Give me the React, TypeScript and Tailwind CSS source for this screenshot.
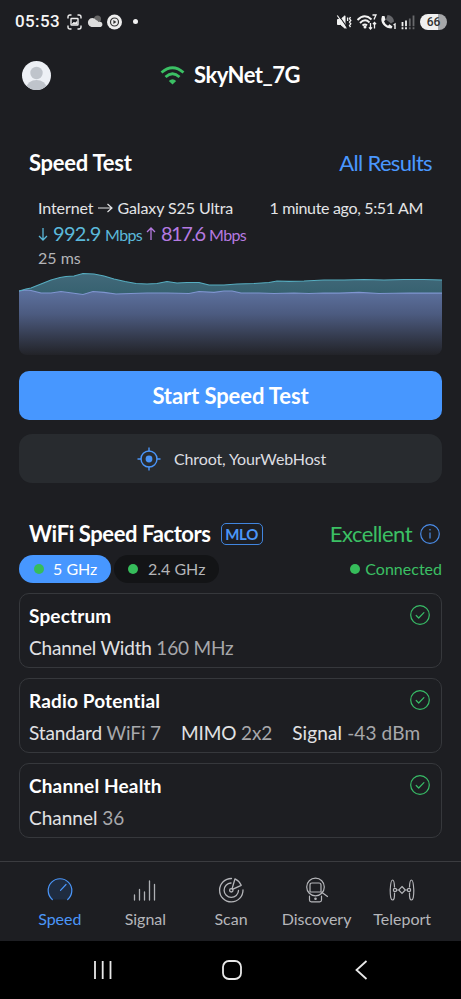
import React from "react";

const download =
  "0,101 7,99 12,98 22,94 32,90 41,87.5 47,86.5 55,86 64,83.5 75,84 85,86 95,89 106,91.5 117,93.5 128,94 138,93.5 148,91.5 158,93 168,92.5 180,92.5 190,95 205,95 218,94 235,93.5 250,92.5 258,91 270,91.3 285,91 305,90 325,90 345,89.5 365,90 385,89.5 405,89.5 423,90";
const upload =
  "0,101 7,100 12,100.5 22,103 32,103 42,101.5 53,103 64,104.5 74,101.5 85,102.3 97,104 112,103.5 128,103 148,103 170,103.5 180,101.5 195,102.3 205,101 213,101 222,103 240,103 255,103.5 275,103 290,103.5 305,103 320,103.2 340,102.3 360,103.5 390,103 423,103.2";

function SpeedChart() {
  return (
    <svg className="block h-[165px] w-full" viewBox="0 0 423 165" preserveAspectRatio="none">
      <defs>
        <linearGradient id="down" x1="0" y1="83" x2="0" y2="165" gradientUnits="userSpaceOnUse">
          <stop offset="0" stopColor="#42697a" />
          <stop offset="0.3" stopColor="#35606e" />
          <stop offset="1" stopColor="#1d1e22" />
        </linearGradient>
        <linearGradient id="up" x1="0" y1="102" x2="0" y2="165" gradientUnits="userSpaceOnUse">
          <stop offset="0" stopColor="#5c709d" />
          <stop offset="0.35" stopColor="#4c5b80" />
          <stop offset="0.75" stopColor="#323849" />
          <stop offset="1" stopColor="#222328" />
        </linearGradient>
      </defs>
      <polygon points={`0,165 ${download} 423,165`} fill="url(#down)" />
      <polygon points={`0,165 ${upload} 423,165`} fill="url(#up)" />
      <polyline points={upload} fill="none" stroke="#7f95d0" strokeWidth="1.2" />
      <polyline points={download} fill="none" stroke="#56adc0" strokeWidth="1.2" />
    </svg>
  );
}

function StatusBar() {
  return (
    <header className="flex h-[43px] items-center pl-[15px] pr-[14px] text-[#f5f5f5]">
      <span className="w-[52px] font-['Roboto'] text-[17px] font-medium tracking-[0.4px]">05:53</span>
      <svg className="h-4 w-16" viewBox="0 0 64 16" fill="none" stroke="#eee" strokeWidth="1.4">
        <path d="M1 4.500V3Q1 1 3 1H4.500M10.500 1h1.500Q14 1 14 3V4.500M14 11.500v1.500q0 2-2 2H10.500M4.500 15H3q-2 0-2-2V11.500" />
        <rect x="4" y="4.500" width="7" height="6.500" rx="0.5" />
        <path d="M5 10l2-2 1 1 2-1.500v2.500z" fill="#eee" strokeWidth="0.6" />
        <circle cx="30.500" cy="5" r="3.500" fill="#666" stroke="none" />
        <path d="M24.500 13a4.500 4.500 0 1 1 4.500-7 4 4 0 0 1 2.500 2A2.700 2.700 0 1 1 32 13z" fill="#ddd" stroke="none" />
        <circle cx="47.500" cy="8" r="7.500" fill="#eee" stroke="none" />
        <circle cx="47.500" cy="8" r="4" stroke="#333" strokeWidth="1.200" />
        <path d="M46.400 6l3 2-3 2z" fill="#333" stroke="none" />
      </svg>
      <span className="ml-[2px] size-[5px] rounded-full bg-[#f2f2f2]" />
      <svg className="ml-auto h-[18px] w-[80px]" viewBox="0 0 80 18" fill="none" stroke="#f2f2f2" strokeWidth="1.500">
        <path d="M1.500 6.500h3L9 2.800v12.400l-4.500-3.700h-3z" fill="#f2f2f2" strokeWidth="1" strokeLinejoin="round" />
        <path d="M2.500 2l9 13" stroke="#1d1e22" strokeWidth="1.200" />
        <path d="M1.300 2.500l9 13" strokeWidth="1.200" />
        <path d="M11.600 4.500v3.500M14.500 4l-1 1.700 1.300 1.700-1.300 1.700 1.300 1.700-1.300 1.700 1 1.700" strokeWidth="1.300" />
        <path d="M21.500 7q7-7 14-.5M24 10q5-5 9.500-.5M26.500 12.500q2.500-2.200 4.500 0" strokeWidth="1.900" />
        <circle cx="29" cy="14" r="1.500" fill="#f2f2f2" stroke="none" />
        <path d="M36.500 2h3.500l-2 4.500M34.500 10v6m-1.600-1.600 1.600 1.600 1.600-1.600M38.500 15.500V9.500m-1.600 1.600 1.600-1.600 1.600 1.600" strokeWidth="1.300" />
        <path d="M51.500 2a6.500 6.500 0 0 1 6.500 6.500l-3 2-5-4z" fill="#65666a" stroke="none" />
        <path d="M46 3q-1.800 5.500 1.500 9t8 3.500l1-2-3-2.300-1.500 1.500q-3-1.500-4-4.500l1.500-1.500-1-3.700z" fill="#f2f2f2" stroke="none" />
        <path d="M57.500 12l1.500-1v5" strokeWidth="1.400" />
        <path d="M66.500 9v4.200M66.500 14.200v2M70 7.500v5.700M70 14.200v2" strokeWidth="1.800" />
        <path d="M73.800 5.500v7.700M73.800 14.200v2M77.500 2.500v10.700M77.500 14.200v2" stroke="#68696c" strokeWidth="1.800" />
      </svg>
      <span className="ml-1 flex h-[16px] w-[27px] items-center justify-center rounded-full bg-linear-to-r from-[#f0f0f0] from-66% to-[#a6a7a9] to-66% font-['Roboto'] text-[12px] leading-none font-medium text-[#333]">66</span>
    </header>
  );
}

function CheckCircle() {
  return (
    <svg className="size-5 shrink-0" viewBox="0 0 20 20" fill="none" stroke="#38bd67" strokeWidth="1.200" strokeLinecap="round" strokeLinejoin="round">
      <circle cx="10" cy="10" r="9.300" />
      <path d="M6.200 10.500l2.500 2.500 5.200-5.400" />
    </svg>
  );
}

function FactorCard({ title, children }: { title: string; children: React.ReactNode }) {
  return (
    <section className="h-[75px] rounded-[10px] border border-[#36383c] pl-[9px] pr-[11px] pt-[10px]">
      <div className="flex h-[22px] items-center justify-between">
        <h3 className="text-[19px] font-bold tracking-[0.15px] text-white">{title}</h3>
        <CheckCircle />
      </div>
      <div className="mt-[10px] flex h-[22px] items-center gap-5 text-[19px] tracking-[-0.12px] whitespace-nowrap text-[#e1e2e4]">{children}</div>
    </section>
  );
}

function Metric({ name, value, track = "" }: { name: string; value: string; track?: string }) {
  return (
    <span className={track}>
      {name} <span className="text-[#a7a8ab]">{value}</span>
    </span>
  );
}

function SpeedIcon() {
  return (
    <svg className="size-[26px]" viewBox="0 0 26 26" fill="none" stroke="#4b96f8" strokeWidth="1.200" strokeLinecap="round">
      <path d="M5.300 22.500A11.800 11.800 0 1 1 20.700 22.500Z" fill="#1f2c40" stroke="none" />
      <path d="M5.300 22.500A11.800 11.800 0 1 1 20.700 22.500M13.500 13.300l5.500-5.800" />
    </svg>
  );
}

function SignalIcon() {
  return (
    <svg className="size-[26px]" viewBox="0 0 26 26" fill="none" stroke="#aeb0b4" strokeWidth="1.300" strokeLinecap="round">
      <path d="M2.500 18v5M7.500 12.500V23M12.500 15v8M17.500 4v19M22.500 7.500V23" />
    </svg>
  );
}

function ScanIcon() {
  return (
    <svg className="size-[26px]" viewBox="0 0 26 26" fill="none" stroke="#b5b6ba" strokeWidth="1.300" strokeLinecap="round" strokeLinejoin="round">
      <path d="M13.500 1.500A11.700 11.700 0 1 0 25 13M13 6A7.200 7.200 0 1 0 20.500 13.500M14 12l3-10.200A12 12 0 0 1 23.200 8.300L15 12.200" />
      <circle cx="13.300" cy="13.300" r="1.700" />
    </svg>
  );
}

function DiscoveryIcon() {
  return (
    <svg className="size-[26px]" viewBox="0 0 26 26" fill="none" stroke="#b5b6ba" strokeWidth="1.200" strokeLinecap="round" strokeLinejoin="round">
      <circle cx="11.500" cy="10" r="8.800" />
      <path d="M6 15V8q0-2 2-2h7q2 0 2 2v7zM5.500 19v4q0 1.800 1.800 1.800h8.400q1.800 0 1.800-1.800v-4M18 15.500l5.500 4" />
      <circle cx="11.500" cy="21.700" r="0.700" fill="#b5b6ba" />
    </svg>
  );
}

function TeleportIcon() {
  return (
    <svg className="size-[26px]" viewBox="0 0 26 26" fill="none" stroke="#b5b6ba" strokeWidth="1.200" strokeLinecap="round">
      <path d="M5.500 10Q5.300 3 3.500 3T1.200 13Q1.200 23 3.500 23T5.500 16M20.500 10Q20.700 3 22.500 3T24.800 13Q24.800 23 22.500 23T20.500 16M13 9.500l3.300 3.500-3.300 3.500L9.700 13zM7.600 13h2M16.400 13h2" />
      <circle cx="6" cy="13" r="1.600" />
      <circle cx="20" cy="13" r="1.600" />
    </svg>
  );
}

const tabs = [
  { label: "Speed", icon: <SpeedIcon />, color: "text-[#4b96f8]" },
  { label: "Signal", icon: <SignalIcon />, color: "text-[#b5b6ba]" },
  { label: "Scan", icon: <ScanIcon />, color: "text-[#b5b6ba]" },
  { label: "Discovery", icon: <DiscoveryIcon />, color: "text-[#b5b6ba]" },
  { label: "Teleport", icon: <TeleportIcon />, color: "text-[#b5b6ba]" },
];

export default function App() {
  return (
    <div className="flex h-[999px] w-[461px] flex-col overflow-hidden bg-[#1d1e22] font-['Lato',sans-serif] leading-none text-white">
      <StatusBar />
      <div className="flex h-[64px] items-center pl-[22px]">
        <svg className="size-[29px]" viewBox="0 0 29 29">
          <clipPath id="avatar"><circle cx="14.500" cy="14.500" r="14.500" /></clipPath>
          <g clipPath="url(#avatar)">
            <rect width="29" height="29" fill="#edf0f5" />
            <circle cx="14.500" cy="12" r="6.200" fill="#bfc4cb" />
            <ellipse cx="14.500" cy="27" rx="10" ry="8" fill="#bfc4cb" />
          </g>
        </svg>
        <svg className="ml-[109px] h-[19px] w-[25px]" viewBox="0 0 25 19" fill="none" stroke="#3bc064" strokeWidth="2.800">
          <path d="M1.500 6.500Q12.500-3 23.500 6.500M5.500 11Q12.500 4.500 19.500 11" />
          <path d="M8.800 15q3.700-3.500 7.400 0L12.500 18.500z" fill="#3bc064" stroke="none" />
        </svg>
        <h1 className="ml-[9px] text-[22px] font-bold tracking-[-0.5px] whitespace-nowrap">SkyNet_7G</h1>
      </div>

      <main className="flex flex-col px-[19px] pt-[44px]">
        <div className="flex h-6 items-center justify-between px-[10px]">
          <h2 className="text-[22px] font-bold tracking-[-0.25px]">Speed Test</h2>
          <a className="text-[22px] tracking-[-0.650px] text-[#4a98ff]">All Results</a>
        </div>

        <section className="mt-[14px] grid h-[166px] overflow-hidden rounded-b-[8px] border-t border-transparent">
          <div className="col-start-1 row-start-1"><SpeedChart /></div>
          <div className="z-10 col-start-1 row-start-1 px-[19px] pt-[8px]">
            <div className="flex h-5 items-center justify-between text-[16px] whitespace-nowrap text-[#e3e4e6]">
              <span className="flex items-center tracking-[-0.100px]">Internet
                <svg className="mx-[4px] h-3 w-4" viewBox="0 0 16 12" fill="none" stroke="currentColor" strokeWidth="1.200"><path d="M1 6h14M10.500 2L15 6l-4.500 4" /></svg>
                Galaxy S25 Ultra
              </span>
              <span className="tracking-[-0.330px]">1 minute ago, 5:51 AM</span>
            </div>
            <div className="mt-[5px] flex h-[24px] items-baseline whitespace-nowrap">
              <svg className="mr-[5px] h-[14px] w-[10px]" viewBox="0 0 10 14" fill="none" stroke="#5bb9da" strokeWidth="1.300"><path d="M5 1v12M1 9l4 4 4-4" /></svg>
              <span className="w-[48px] text-[20px] tracking-[-0.700px] text-[#5bb9da]">992.9</span>
              <span className="ml-[4px] w-[37px] text-[16px] tracking-[-0.600px] text-[#5bb9da]">Mbps</span>
              <svg className="mr-[5px] ml-[4px] h-[14px] w-[10px]" viewBox="0 0 10 14" fill="none" stroke="#b57ae0" strokeWidth="1.300"><path d="M5 13V1M1 5l4-4 4 4" /></svg>
              <span className="w-[43px] text-[20px] tracking-[-1.500px] text-[#b57ae0]">817.6</span>
              <span className="ml-[5px] text-[16px] tracking-[-0.600px] text-[#b57ae0]">Mbps</span>
            </div>
            <div className="mt-[3px] text-[16px] text-[#b4b5b8]">25 ms</div>
          </div>
        </section>

        <button className="mt-[16px] flex h-[49px] items-center justify-center rounded-[10px] bg-[#4797ff] text-[22px] font-bold tracking-[-0.100px]">Start Speed Test</button>
        <button className="mt-[14px] flex h-[49px] items-center justify-center gap-[13px] rounded-[13px] bg-[#282b2f] pl-[2px] text-[16px] tracking-[-0.120px] text-[#dddee1]">
          <svg className="size-6" viewBox="0 0 24 24" fill="none" stroke="#4a95f8" strokeWidth="1.400">
            <circle cx="12" cy="12" r="8" />
            <circle cx="12" cy="12" r="3.400" fill="#4a95f8" stroke="none" />
            <path d="M12 .5v4M12 19.500v4M.5 12h4M19.500 12h4" />
          </svg>
          Chroot, YourWebHost
        </button>

        <div className="mt-[39px] flex h-6 items-center pl-[10px] pr-[2px]">
          <h2 className="text-[22px] font-bold tracking-[-0.400px] whitespace-nowrap">WiFi Speed Factors</h2>
          <span className="ml-[10px] flex h-[22px] w-[42px] items-center justify-center rounded-[5px] border-[1.500px] border-[#4185de] text-[15px] font-bold tracking-[-0.400px] text-[#4b96f8]">MLO</span>
          <span className="ml-auto text-[22px] tracking-[-0.550px] text-[#3bc064]">Excellent</span>
          <svg className="ml-2 size-5" viewBox="0 0 20 20" fill="none" stroke="#4a8ce8" strokeWidth="1.200">
            <circle cx="10" cy="10" r="9.300" /><path d="M10 8.500v6M10 5v1.500" />
          </svg>
        </div>
        <div className="mt-[9px] flex h-7 items-center text-[16px]">
          <span className="flex h-7 w-[92px] items-center rounded-full bg-[#4797ff] pl-[15px]"><i className="mr-[9px] size-[10px] rounded-full bg-[#36bd5b]" />5 GHz</span>
          <span className="ml-[3px] flex h-7 w-[105px] items-center rounded-full bg-[#131416] pl-[14px] text-[#b4b5b8]"><i className="mr-[10px] size-[10px] rounded-full bg-[#36bd5b]" />2.4 GHz</span>
          <span className="ml-auto flex items-center text-[#3bc064]"><i className="mr-[5px] size-[10px] rounded-full bg-[#36bd5b]" />Connected</span>
        </div>

        <div className="mt-[10px] flex flex-col gap-[10px]">
          <FactorCard title="Spectrum"><Metric name="Channel Width" value="160 MHz" track="tracking-[-0.2px]" /></FactorCard>
          <FactorCard title="Radio Potential">
            <Metric name="Standard" value="WiFi 7" />
            <Metric name="MIMO" value="2x2" />
            <Metric name="Signal" value="-43 dBm" track="tracking-[0.12px]" />
          </FactorCard>
          <FactorCard title="Channel Health"><Metric name="Channel" value="36" track="tracking-normal" /></FactorCard>
        </div>
      </main>

      <nav className="mt-auto grid h-[80px] shrink-0 grid-cols-5 border-t border-[#3b3c40] pr-[16px] pl-[17px] pt-[15px] text-[16px]">
        {tabs.map((tab) => (
          <div key={tab.label} className={`flex flex-col items-center gap-[8px] ${tab.color}`}>{tab.icon}<span>{tab.label}</span></div>
        ))}
      </nav>
      <footer className="flex h-[58px] shrink-0 items-center justify-center bg-black">
        <svg className="h-[24px] w-[280px]" viewBox="0 0 280 24" fill="none" stroke="#e8e8e8" strokeWidth="1.800">
          <path d="M4 3v18M11.700 3v18M19.500 3v18M275.500 3l-10 9 10 9" />
          <rect x="132" y="3" width="18" height="18" rx="6" />
        </svg>
      </footer>
    </div>
  );
}
